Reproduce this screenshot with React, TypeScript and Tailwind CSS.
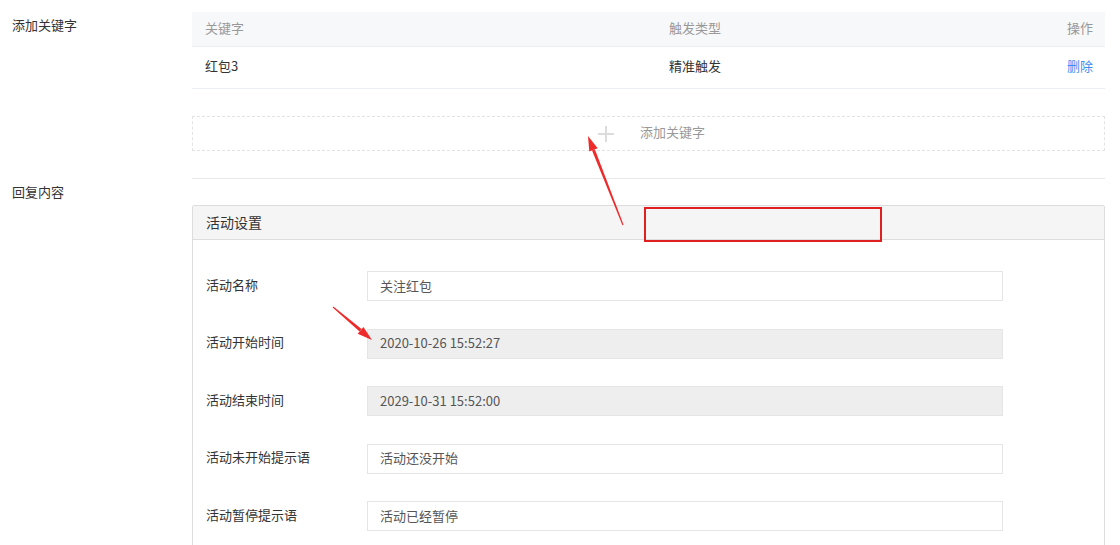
import React from 'react';

const font = { fontFamily: '"Noto Sans CJK SC", "Microsoft YaHei", sans-serif' };

const fields = [
  { label: '活动名称', value: '关注红包', disabled: false },
  { label: '活动开始时间', value: '2020-10-26 15:52:27', disabled: true },
  { label: '活动结束时间', value: '2029-10-31 15:52:00', disabled: true },
  { label: '活动未开始提示语', value: '活动还没开始', disabled: false },
  { label: '活动暂停提示语', value: '活动已经暂停', disabled: false },
];

function Arrow({ x1, y1, x2, y2 }: { x1: number; y1: number; x2: number; y2: number }) {
  const ang = Math.atan2(y2 - y1, x2 - x1);
  const len = 15;
  const w = 4.5;
  const bx = x2 - len * Math.cos(ang);
  const by = y2 - len * Math.sin(ang);
  const px = -Math.sin(ang) * w;
  const py = Math.cos(ang) * w;
  const t = -Math.sin(ang) * 0.6;
  const u = Math.cos(ang) * 0.6;
  return (
    <g fill="#ee2b2b">
      <polygon points={`${x1 + t},${y1 + u} ${x1 - t},${y1 - u} ${bx - px * 0.35},${by - py * 0.35} ${bx + px * 0.35},${by + py * 0.35}`} />
      <polygon points={`${x2},${y2} ${bx + px},${by + py} ${bx - px},${by - py}`} />
    </g>
  );
}

export default function App() {
  return (
    <div className="relative w-[1120px] h-[545px] overflow-hidden bg-white text-[13px] text-[#333]" style={font}>
      {/* 添加关键字 */}
      <div className="flex">
        <div className="w-[192px] shrink-0 pl-3 pt-[16px] leading-[18px]">添加关键字</div>
        <div className="w-[913px] pt-3 border-b border-[#e8e8e8] pb-[27px]">
          <div className="grid grid-cols-[477px_1fr_auto] h-[35px] items-center bg-[#f7f8fa] border-b border-[#ebeef5] text-[#999] pb-[2px]">
            <div className="pl-[13px]">关键字</div>
            <div>触发类型</div>
            <div className="pr-3">操作</div>
          </div>
          <div className="grid grid-cols-[477px_1fr_auto] h-[42px] items-center border-b border-[#ebeef5] pb-[3px]">
            <div className="pl-[13px]">红包3</div>
            <div>精准触发</div>
            <div className="pr-3 text-[#3d8ef2]">删除</div>
          </div>
          <div className="mt-[27px] h-[35px] border border-dashed border-[#e3e3e3] flex items-center justify-center gap-[26px] pl-[6px] text-[#999]">
            <span className="relative w-4 h-4">
              <span className="absolute left-0 top-[7px] w-4 h-[2px] bg-[#dcdcdc]" />
              <span className="absolute top-0 left-[7px] w-[2px] h-4 bg-[#dcdcdc]" />
            </span>
            <span className="pb-[3px]">添加关键字</span>
          </div>
        </div>
      </div>

      {/* 回复内容 */}
      <div className="flex">
        <div className="w-[192px] shrink-0 pl-3 pt-[4px] leading-[18px]">回复内容</div>
        <div className="w-[913px] mt-[26px] border border-[#ddd] rounded-t-[2px]">
          <div className="h-[34px] bg-[#f5f5f5] border-b border-[#ddd] flex items-center pl-[13px] pb-[1px] text-[14px]">活动设置</div>
          <div className="pl-[13px] pt-[31px] pb-[30px] flex flex-col gap-[27.5px]">
            {fields.map((f) => (
              <div key={f.label} className="flex items-center">
                <div className="w-[161px] shrink-0 text-[#333] pb-[3px]">{f.label}</div>
                <div
                  className={
                    f.disabled
                      ? 'w-[636px] h-[30px] flex items-center pl-3 pb-[1px] border border-[#e5e5e5] bg-[#eeeeee] text-[#555]'
                      : 'w-[636px] h-[30px] flex items-center pl-3 pb-[1px] border border-[#e5e5e5] bg-white text-[#555]'
                  }
                >
                  {f.value}
                </div>
              </div>
            ))}
          </div>
        </div>
      </div>

      {/* annotations */}
      <div className="absolute left-[644px] top-[207px] w-[238px] h-[35px] border-2 border-[#e02020]" />
      <svg className="absolute inset-0 pointer-events-none" width="1120" height="545">
        <Arrow x1={623} y1={225} x2={588} y2={136} />
        <Arrow x1={333} y1={307} x2={372} y2={340} />
      </svg>
    </div>
  );
}
